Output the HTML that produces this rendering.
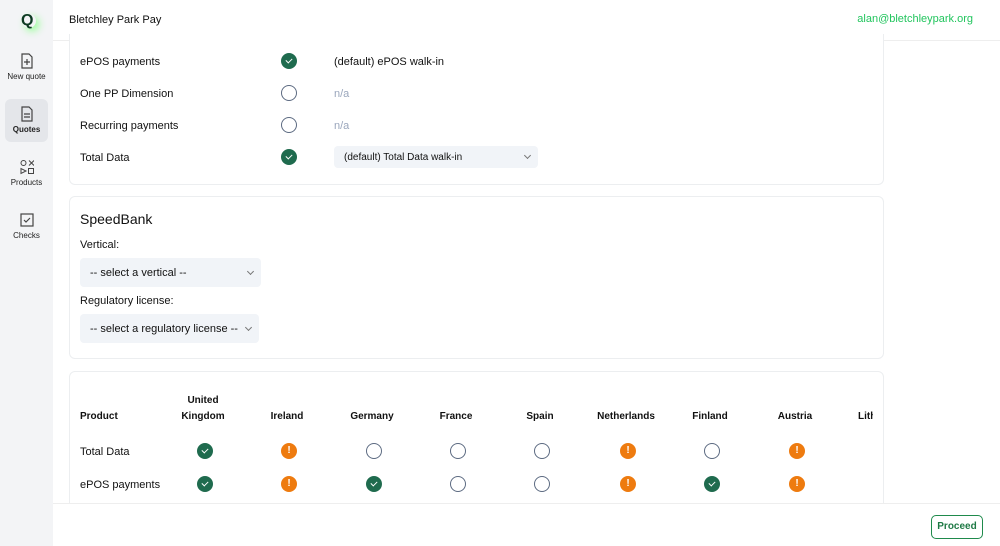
<!DOCTYPE html>
<html><head><meta charset="utf-8"><style>
*{box-sizing:border-box;margin:0;padding:0}
body{width:1000px;height:546px;overflow:hidden;background:#fff;font-family:"Liberation Sans",Arial,sans-serif;color:#111;position:relative}
.side{position:absolute;left:0;top:0;width:53px;height:546px;background:#f3f4f6}
.nav{position:absolute;left:5px;width:43px;text-align:center;font-size:8px;color:#222}
.nav svg{display:block;margin:0 auto 3px}
.a{position:absolute}
.hdr{position:absolute;left:53px;top:0;right:0;height:41px;border-bottom:1px solid #eee}
.card{position:absolute;left:69px;width:815px;border:1px solid #eceef0;border-radius:6px;background:#fff}
.t{position:absolute;font-size:11px;white-space:nowrap}
.ok{position:absolute;width:16px;height:16px;border-radius:50%;background:#1f6b4e}
.ok:after{content:"";position:absolute;left:5px;top:4.5px;width:5px;height:3px;border-left:1.5px solid #fff;border-bottom:1.5px solid #fff;transform:rotate(-45deg)}
.no{position:absolute;width:16px;height:16px;border-radius:50%;border:1.5px solid #5d6b82}
.wa{position:absolute;width:16px;height:16px;border-radius:50%;background:#ee7b0f;color:#fff;font-size:10px;font-weight:bold;text-align:center;line-height:16px}
.sel{position:absolute;background:#f1f4f8;border-radius:4px;font-size:11px;padding-left:10px;color:#111}
.sel i{position:absolute;right:8px;top:50%;margin-top:-4px;width:5px;height:5px;border-right:1px solid #777;border-bottom:1px solid #777;transform:rotate(45deg)}
.th{position:absolute;font-size:10px;font-weight:bold;text-align:center;width:84px;line-height:16px}
</style></head><body>
<div class="side">
  <div class="a" style="left:22px;top:14px;width:14px;height:14px;border-radius:50%;box-shadow:3px 3px 8px #9f9"></div>
  <div class="a" style="left:21px;top:12px;font-weight:bold;font-size:16px;color:#0d3b22">Q</div>
  <div class="nav" style="top:53px"><svg width="14" height="16" viewBox="0 0 14 16"><path d="M2 1h7l3 3v11H2z" fill="none" stroke="#444" stroke-width="1.2"/><path d="M7 6v6M4 9h6" stroke="#444" stroke-width="1.2"/></svg>New quote</div>
  <div class="a" style="left:5px;top:99px;width:43px;height:43px;background:#e4e6ea;border-radius:6px"></div>
  <div class="nav" style="top:106px;font-weight:bold"><svg width="14" height="16" viewBox="0 0 14 16"><path d="M2 1h7l3 3v11H2z" fill="none" stroke="#444" stroke-width="1.2"/><path d="M4 8h6M4 11h6" stroke="#444" stroke-width="1.2"/></svg>Quotes</div>
  <div class="nav" style="top:159px"><svg width="14" height="16" viewBox="0 0 14 16"><circle cx="3.5" cy="4" r="2.5" fill="none" stroke="#444"/><path d="M9 1.5l5 5M14 1.5l-5 5" stroke="#444"/><path d="M1 9.5v5l5-2.5z" fill="none" stroke="#444"/><rect x="8.5" y="9.5" width="5" height="5" fill="none" stroke="#444"/></svg>Products</div>
  <div class="nav" style="top:212px"><svg width="14" height="16" viewBox="0 0 14 16"><rect x="1" y="2" width="12" height="12" fill="none" stroke="#444" stroke-width="1.2"/><path d="M4 8l2 2 4-4" fill="none" stroke="#444" stroke-width="1.2"/></svg>Checks</div>
</div>
<div class="hdr">
  <div class="t" style="left:16px;top:14px;font-size:11px">Bletchley Park Pay</div>
  <div class="t" style="right:27px;top:13px;font-size:11px;color:#22c55e">alan@bletchleypark.org</div>
</div>

<div class="card" style="top:34px;height:151px;border-top:none;border-radius:0 0 6px 6px">
  <div class="t" style="left:10px;top:22px">ePOS payments</div>
  <div class="t" style="left:10px;top:54px">One PP Dimension</div>
  <div class="t" style="left:10px;top:86px">Recurring payments</div>
  <div class="t" style="left:10px;top:118px">Total Data</div>
  <div class="ok" style="left:211px;top:19px"></div>
  <div class="no" style="left:211px;top:51px"></div>
  <div class="no" style="left:211px;top:83px"></div>
  <div class="ok" style="left:211px;top:115px"></div>
  <div class="t" style="left:264px;top:22px">(default) ePOS walk-in</div>
  <div class="t" style="left:264px;top:54px;color:#9aa6bc">n/a</div>
  <div class="t" style="left:264px;top:86px;color:#9aa6bc">n/a</div>
  <div class="sel" style="left:264px;top:112px;width:204px;height:22px;line-height:23px;font-size:10px">(default) Total Data walk-in<i></i></div>
</div>

<div class="card" style="top:196px;height:163px">
  <div class="t" style="left:10px;top:14px;font-size:14px">SpeedBank</div>
  <div class="t" style="left:10px;top:42px">Vertical:</div>
  <div class="sel" style="left:10px;top:61px;width:181px;height:29px;line-height:30px">-- select a vertical --<i></i></div>
  <div class="t" style="left:10px;top:98px">Regulatory license:</div>
  <div class="sel" style="left:10px;top:117px;width:179px;height:29px;line-height:30px">-- select a regulatory license --<i></i></div>
</div>

<div class="card" style="top:371px;height:150px;overflow:hidden">
  <div class="t" style="left:10px;top:39px;font-size:10px;font-weight:bold">Product</div>
  <div class="th" style="left:91px;top:21px">United<br>Kingdom</div>
  <div class="th" style="left:175px;top:37px">Ireland</div>
  <div class="th" style="left:260px;top:37px">Germany</div>
  <div class="th" style="left:344px;top:37px">France</div>
  <div class="th" style="left:428px;top:37px">Spain</div>
  <div class="th" style="left:514px;top:37px">Netherlands</div>
  <div class="th" style="left:598px;top:37px">Finland</div>
  <div class="th" style="left:683px;top:37px">Austria</div>
  <div class="th" style="left:768px;top:37px;width:35px;overflow:hidden;text-align:left;padding-left:20px">Lithuania</div>
  <div class="t" style="left:10px;top:74px">Total Data</div>
  <div class="t" style="left:10px;top:107px">ePOS payments</div>
  <div class="ok" style="left:127px;top:71px"></div>
  <div class="wa" style="left:211px;top:71px">!</div>
  <div class="no" style="left:296px;top:71px"></div>
  <div class="no" style="left:380px;top:71px"></div>
  <div class="no" style="left:464px;top:71px"></div>
  <div class="wa" style="left:550px;top:71px">!</div>
  <div class="no" style="left:634px;top:71px"></div>
  <div class="wa" style="left:719px;top:71px">!</div>
  <div class="ok" style="left:127px;top:104px"></div>
  <div class="wa" style="left:211px;top:104px">!</div>
  <div class="ok" style="left:296px;top:104px"></div>
  <div class="no" style="left:380px;top:104px"></div>
  <div class="no" style="left:464px;top:104px"></div>
  <div class="wa" style="left:550px;top:104px">!</div>
  <div class="ok" style="left:634px;top:104px"></div>
  <div class="wa" style="left:719px;top:104px">!</div>
</div>

<div class="a" style="left:53px;top:503px;width:947px;height:43px;background:#fff;border-top:1px solid #eee"></div>
<div class="a" style="left:931px;top:515px;width:52px;height:24px;border:1.5px solid #1f8a4c;border-radius:5px;color:#1f7a45;font-size:10px;font-weight:bold;text-align:center;line-height:21px">Proceed</div>
</body></html>
